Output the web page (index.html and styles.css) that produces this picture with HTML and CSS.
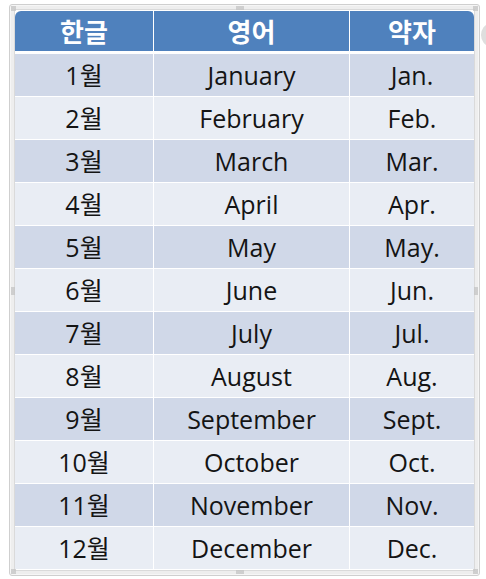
FILE: index.html
```html
<!DOCTYPE html>
<html lang="ko">
<head>
<meta charset="utf-8">
<link rel="stylesheet" href="styles.css">
</head>
<body>
<div class="page">
  <div class="frame">
    <span class="dots tl"></span><span class="dots tm"></span><span class="dots tr"></span>
    <span class="dots ml"></span><span class="dots mr"></span>
    <span class="dots bl"></span><span class="dots bm"></span><span class="dots br"></span>
    <table class="months">
      <thead>
        <tr><th>한글</th><th>영어</th><th>약자</th></tr>
      </thead>
      <tbody>
        <tr><td>1월</td><td>January</td><td>Jan.</td></tr>
        <tr><td>2월</td><td>February</td><td>Feb.</td></tr>
        <tr><td>3월</td><td>March</td><td>Mar.</td></tr>
        <tr><td>4월</td><td>April</td><td>Apr.</td></tr>
        <tr><td>5월</td><td>May</td><td>May.</td></tr>
        <tr><td>6월</td><td>June</td><td>Jun.</td></tr>
        <tr><td>7월</td><td>July</td><td>Jul.</td></tr>
        <tr><td>8월</td><td>August</td><td>Aug.</td></tr>
        <tr><td>9월</td><td>September</td><td>Sept.</td></tr>
        <tr><td>10월</td><td>October</td><td>Oct.</td></tr>
        <tr><td>11월</td><td>November</td><td>Nov.</td></tr>
        <tr><td>12월</td><td>December</td><td>Dec.</td></tr>
      </tbody>
    </table>
  </div>
  <span class="knob"></span>
</div>
</body>
</html>
```
FILE: styles.css
```css
html, body {
  margin: 0;
  padding: 0;
  background: #ffffff;
}
.page {
  position: relative;
  width: 486px;
  height: 579px;
  overflow: hidden;
}
.frame {
  position: relative;
  margin: 4px 0 0 9px;
  width: 459px;
  height: 561px;
  padding: 6px 5px 3px 5px;
  border: 1px solid #cfcfcf;
  border-radius: 3px;
  background: #ffffff;
  box-shadow: inset 0 0 0 1px #f6f6f6, inset 0 0 0 4px #eeeeee, inset 0 0 0 5px #dadada;
}
.months {
  border-collapse: collapse;
  width: 459px;
  table-layout: fixed;
  font-family: "Open Sans", "Noto Sans CJK KR", sans-serif;
  font-size: 25px;
  text-align: center;
}
.months th:nth-child(1), .months td:nth-child(1) { width: 138px; }
.months th:nth-child(2), .months td:nth-child(2) { width: 195px; }
.months th, .months td {
  height: 42px;
  padding: 0;
  border: 1px solid #ffffff;
  line-height: 42px;
}
.months th {
  background: #4f81bd;
  color: #ffffff;
  font-family: "Noto Sans CJK KR", sans-serif;
  font-weight: 700;
  font-size: 26px;
  border-top: 0;
  border-bottom: 3px solid #ffffff;
  height: 40px;
  line-height: 40px;
}
.months th:first-child { border-left: 0; border-top-left-radius: 6px; }
.months th:last-child { border-right: 0; border-top-right-radius: 6px; }
.months td:first-child { border-left: 0; }
.months td:last-child { border-right: 0; }
.months tbody tr:nth-child(odd) td { background: #d0d8e8; }
.months tbody tr:nth-child(even) td { background: #e9edf4; }
.months td { color: #141414; }

.dots {
  position: absolute;
  width: 8px;
  height: 4px;
  background-image: radial-gradient(circle, #c4c4c4 0.6px, transparent 1px);
  background-size: 2px 2px;
}
.dots.tl { left: 1px; top: 1px; width: 5px; height: 5px; }
.dots.tr { right: 1px; top: 1px; width: 5px; height: 5px; }
.dots.bl { left: 1px; bottom: 1px; width: 5px; height: 5px; }
.dots.br { right: 1px; bottom: 1px; width: 5px; height: 5px; }
.dots.tm { left: 226px; top: 1px; }
.dots.bm { left: 226px; bottom: 1px; }
.dots.ml { left: 1px; top: 282px; width: 4px; height: 8px; }
.dots.mr { right: 1px; top: 282px; width: 4px; height: 8px; }
.knob {
  position: absolute;
  left: 481px;
  top: 24px;
  width: 18px;
  height: 22px;
  border-radius: 50%;
  background: #dedede;
}
```
